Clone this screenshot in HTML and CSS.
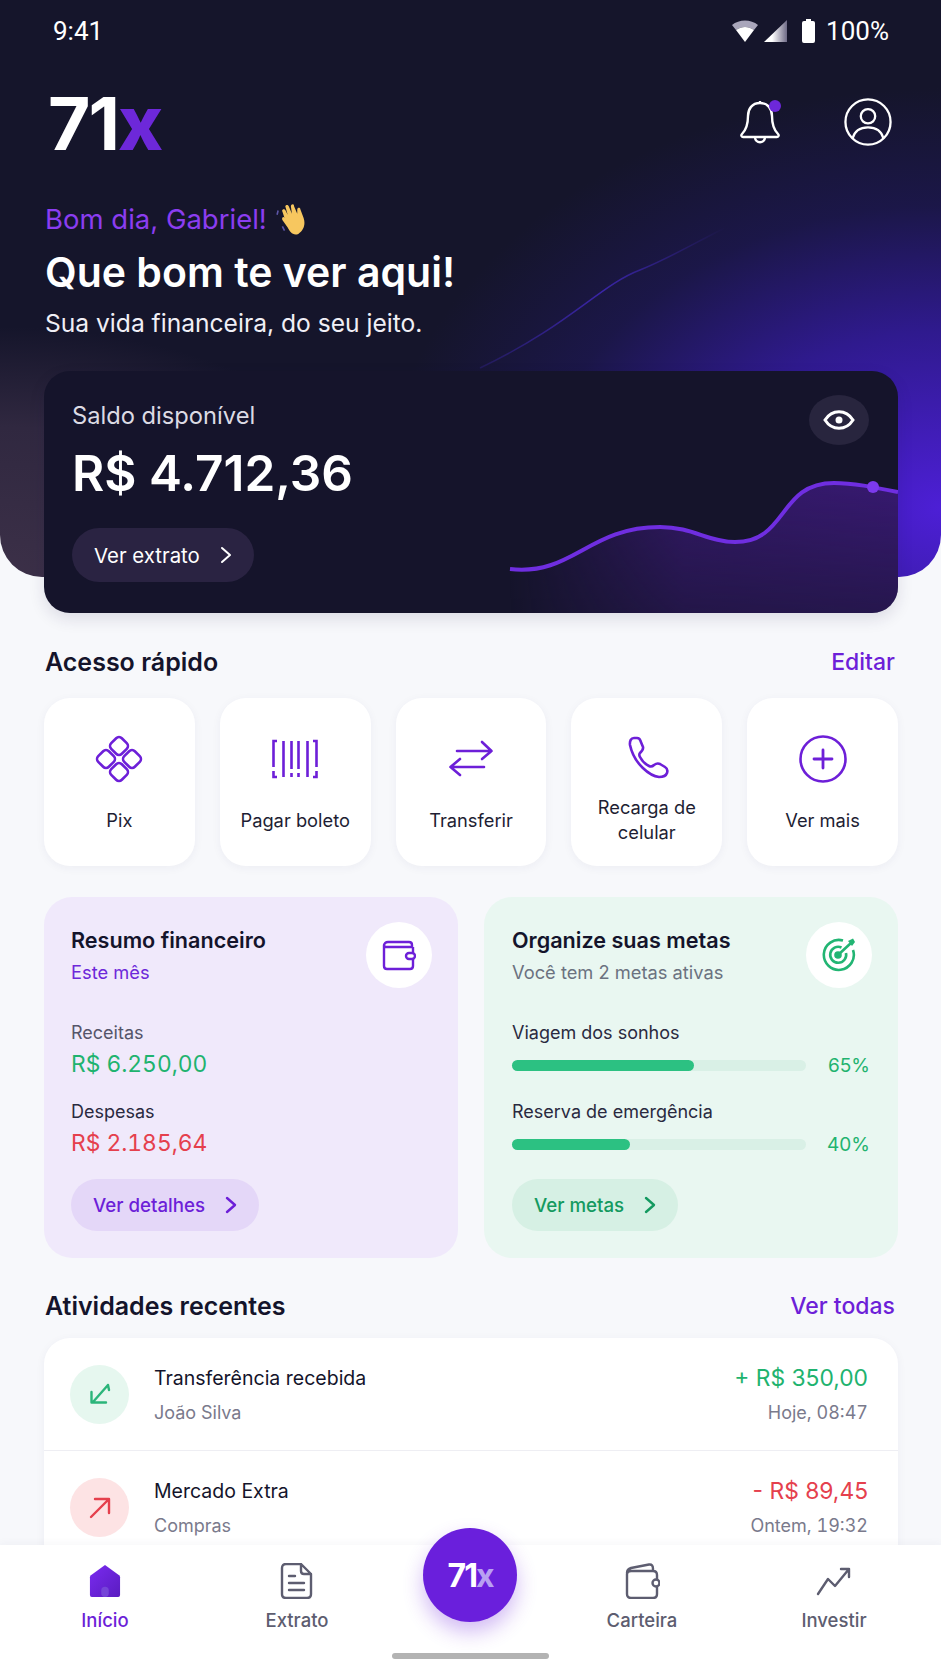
FILE: index.html
```html
<!DOCTYPE html>
<html lang="pt-BR">
<head>
  <meta charset="UTF-8">
  <title>71x</title>
  <link rel="stylesheet" href="styles.css">
</head>
<body>
  <div class="app">
    <header class="hero">
      <svg class="hero-line" viewBox="0 0 941 577"><defs><linearGradient id="line-fade" x1="0" x2="1" y1="0" y2="0"><stop offset="0" stop-color="#3a25a8" stop-opacity=".3"/><stop offset=".5" stop-color="#3a25a8"/><stop offset="1" stop-color="#3a25a8" stop-opacity="0"/></linearGradient></defs><path d="M480 368C570 325 600 285 640 270C670 258 700 240 725 228" fill="none" stroke="url(#line-fade)" stroke-width="1.5"/></svg>
      <div class="status">
        <span class="status-time">9:41</span>
        <div class="status-icons">
          <svg width="26" height="22" viewBox="0 0 26 22"><path d="M0 5C7-1 19-1 26 5L22 10C16 6 10 6 4 10Z" fill="#a9a6bb"/><path d="M4 10C10 6 16 6 22 10L13 22Z" fill="#fff"/></svg>
          <svg width="24" height="22" viewBox="0 0 24 22"><defs><linearGradient id="sig"><stop offset=".35" stop-color="#fff"/><stop offset="1" stop-color="#6e6a86"/></linearGradient></defs><path d="M0 22L23 0V22Z" fill="url(#sig)"/></svg>
          <svg class="status-batt" width="13" height="24" viewBox="0 0 13 24"><path d="M4 0H9V2H11A2 2 0 0 1 13 4V22A2 2 0 0 1 11 24H2A2 2 0 0 1 0 22V4A2 2 0 0 1 2 2H4Z" fill="#fff"/></svg>
          <span>100%</span>
        </div>
      </div>
      <div class="topbar">
        <div class="logo">71<span>x</span></div>
        <div class="topbar-icons">
          <svg width="46" height="48" viewBox="0 0 46 48" fill="none" stroke="#fff" stroke-width="2.4" stroke-linejoin="round"><path d="M21 5V3M21 5C13 5 9 11 9 18C9 27 7 32 3 36C2 37 2 39 4 39H38C40 39 40 37 39 36C35 32 33 27 33 18C33 11 29 5 21 5Z"/><path d="M16 39C16 46 26 46 26 39"/><circle cx="36" cy="8" r="6" fill="#6d28d9" stroke="none"/></svg>
          <svg width="48" height="48" viewBox="0 0 50 50" fill="none" stroke="#fff" stroke-width="2.4"><circle cx="25" cy="25" r="23.5"/><circle cx="25" cy="19" r="7.5"/><path d="M9 42C11 34 17 30.500 25 30.500C33 30.500 39 34 41 42"/></svg>
        </div>
      </div>
      <p class="greeting">Bom dia, Gabriel!
        <svg class="wave" width="34" height="32" viewBox="0 0 32 30"><path d="M2 7L1 11M6 22L8 26" stroke="#5d56a8" stroke-width="1.5" fill="none"/><path d="M8 14L6 8C5 6 8 5 9 7L11 11L9 4C8 2 11 1 12 3L15 10L14 3C14 1 17 0 17 3L20 10L20 6C20 4 23 4 23 6L26 14C28 20 26 26 21 29C16 31 13 27 11 23L6 16C5 14 7 12 8 14Z" fill="#f7c75f"/></svg>
      </p>
      <h1 class="hero-title">Que bom te ver aqui!</h1>
      <p class="hero-sub">Sua vida financeira, do seu jeito.</p>
    </header>

    <section class="balance">
      <svg class="balance-chart" viewBox="0 0 855 242">
        <defs>
          <linearGradient id="glow" x1="0" x2="1" y1="0" y2="0"><stop offset="0" stop-color="#3b1a78" stop-opacity="0"/><stop offset=".45" stop-color="#3b1a78" stop-opacity=".85"/><stop offset="1" stop-color="#3b1a78"/></linearGradient>
          <linearGradient id="fade" x1="0" x2="0" y1="0" y2="1"><stop offset=".35" stop-color="#fff"/><stop offset="1" stop-color="#fff" stop-opacity=".45"/></linearGradient>
          <mask id="fade-mask"><rect width="855" height="242" fill="url(#fade)"/></mask>
        </defs>
        <path d="M467 198C530 205 545 156 617 156C650 156 665 171 692 171C745 171 735 112 791 112C810 112 830 116 855 121V242H467Z" fill="url(#glow)" mask="url(#fade-mask)"/>
        <path d="M467 198C530 205 545 156 617 156C650 156 665 171 692 171C745 171 735 112 791 112C810 112 830 116 855 121" fill="none" stroke="#6f2ee0" stroke-width="4"/>
        <circle cx="830" cy="116" r="6" fill="#7c3aed"/>
      </svg>
      <div class="balance-eye">
        <svg width="32" height="24" viewBox="0 0 32 24" fill="none" stroke="#fff" stroke-width="3"><path d="M2 12C9 1 23 1 30 12C23 23 9 23 2 12Z"/><circle cx="16" cy="12" r="3.500" fill="#fff" stroke="none"/></svg>
      </div>
      <p class="balance-label">Saldo disponível</p>
      <p class="balance-value">R$ 4.712,36</p>
      <a class="balance-btn">Ver extrato
        <svg width="12" height="18" viewBox="0 0 12 18" fill="none" stroke="#fff" stroke-width="2" stroke-linecap="round" stroke-linejoin="round"><path d="M2 2L10 9L2 16"/></svg>
      </a>
    </section>

    <div class="section-head head-quick">
      <h2>Acesso rápido</h2>
      <a>Editar</a>
    </div>

    <div class="quick">
      <div class="quick-item">
        <svg width="50" height="50" viewBox="0 0 50 50" fill="none" stroke="#6d1fd8" stroke-width="2.600">
          <rect x="-7.500" y="-7.500" width="15" height="15" rx="4" transform="translate(25 12) rotate(45)"/>
          <rect x="-7.500" y="-7.500" width="15" height="15" rx="4" transform="translate(25 38) rotate(45)"/>
          <rect x="-7.500" y="-7.500" width="15" height="15" rx="4" transform="translate(12 25) rotate(45)"/>
          <rect x="-7.500" y="-7.500" width="15" height="15" rx="4" transform="translate(38 25) rotate(45)"/>
        </svg>
        <span>Pix</span>
      </div>
      <div class="quick-item">
        <svg width="50" height="50" viewBox="0 0 50 50" fill="none" stroke="#6d1fd8" stroke-width="2.600">
          <path d="M7 7H3.500V33M3.500 37V43H7M13.500 7V43M21.500 7V35M21.500 39V43M28.500 7V35M28.500 39V43M37.500 7V43M43 7H46.500V33M46.500 37V43H43"/>
        </svg>
        <span>Pagar boleto</span>
      </div>
      <div class="quick-item">
        <svg width="50" height="50" viewBox="0 0 50 50" fill="none" stroke="#6d1fd8" stroke-width="2.600" stroke-linecap="round" stroke-linejoin="round">
          <path d="M11 17H45.500M36 8L45.500 17L36 25"/><path d="M38 33H4.500M14 25L4.500 33L14 41"/>
        </svg>
        <span>Transferir</span>
      </div>
      <div class="quick-item">
        <svg width="50" height="50" viewBox="0 0 50 50" fill="none" stroke="#6d1fd8" stroke-width="2.600" stroke-linejoin="round">
          <path d="M8 11C7.500 7 9 4 12 4H15C17 4 18 5 18.500 7L21 13C21.500 15 20 17 18 19C17 20 17 21 18 23C20 27 23 30 27 32C29 33 30 33 32 31C34 29.500 36 29 38 30L43 33C45.500 34.500 46 36 45 39C44 42 41 43 37 43C28 42 12 30 8 11Z"/>
        </svg>
        <span>Recarga de celular</span>
      </div>
      <div class="quick-item">
        <svg width="50" height="50" viewBox="0 0 50 50" fill="none" stroke="#6d1fd8" stroke-width="2.600" stroke-linecap="round">
          <circle cx="25" cy="25" r="22.500"/><path d="M25 16V34M16 25H34" stroke-width="2.800"/>
        </svg>
        <span>Ver mais</span>
      </div>
    </div>

    <div class="panels">
      <section class="panel panel-purple">
        <div class="panel-badge">
          <svg width="34" height="32" viewBox="0 0 34 32" fill="none" stroke="#6d1fd8" stroke-width="2.400" stroke-linejoin="round"><path d="M2 7C2 4 4 3 6 3H27C29 3 30 4 30 6V8H5C3 8 2 7 2 6V27C2 29 3.500 30 5 30H28C29.500 30 31 29 31 27V8"/><rect x="24" y="14" width="9" height="6" rx="3" fill="#fff"/></svg>
        </div>
        <h3>Resumo financeiro</h3>
        <p class="panel-sub sub-purple">Este mês</p>
        <p class="panel-label label-first label-muted">Receitas</p>
        <p class="panel-money money-green">R$ 6.250,00</p>
        <p class="panel-label label-next">Despesas</p>
        <p class="panel-money money-red">R$ 2.185,64</p>
        <a class="panel-btn btn-purple">Ver detalhes
          <svg width="12" height="18" viewBox="0 0 12 18" fill="none" stroke="currentColor" stroke-width="2.400" stroke-linecap="round" stroke-linejoin="round"><path d="M2 2L10 9L2 16"/></svg>
        </a>
      </section>
      <section class="panel panel-green">
        <div class="panel-badge">
          <svg width="34" height="34" viewBox="0 0 34 34" fill="none" stroke="#22b573" stroke-width="2.600"><path d="M21 2.500A15 15 0 1 0 31 12"/><path d="M19.500 9.500A8 8 0 1 0 24 15"/><circle cx="16" cy="17" r="2.500" fill="#22b573"/><path d="M16 17L29 5" stroke-linecap="round"/><path d="M26 3L31 0.500L33 4L30 8Z" fill="#22b573" stroke="none"/></svg>
        </div>
        <h3>Organize suas metas</h3>
        <p class="panel-sub">Você tem 2 metas ativas</p>
        <p class="panel-label label-first">Viagem dos sonhos</p>
        <div class="goal"><div class="goal-track"><div class="goal-fill" style="width:62%"></div></div><span>65%</span></div>
        <p class="panel-label label-goal">Reserva de emergência</p>
        <div class="goal"><div class="goal-track"><div class="goal-fill" style="width:40%"></div></div><span>40%</span></div>
        <a class="panel-btn btn-green">Ver metas
          <svg width="12" height="18" viewBox="0 0 12 18" fill="none" stroke="currentColor" stroke-width="2.400" stroke-linecap="round" stroke-linejoin="round"><path d="M2 2L10 9L2 16"/></svg>
        </a>
      </section>
    </div>

    <div class="section-head head-recent">
      <h2>Atividades recentes</h2>
      <a>Ver todas</a>
    </div>

    <div class="activity">
      <div class="activity-row">
        <div class="activity-icon icon-green">
          <svg width="24" height="24" viewBox="0 0 24 24" fill="none" stroke="#2bb57a" stroke-width="2.400" stroke-linecap="round" stroke-linejoin="round"><path d="M20 3L5 20M3.500 10V20.500H18M20 3L21 8"/></svg>
        </div>
        <div class="activity-main">
          <p class="activity-name">Transferência recebida</p>
          <p class="activity-meta">João Silva</p>
        </div>
        <div class="activity-side">
          <p class="activity-value money-green">+ R$ 350,00</p>
          <p class="activity-meta">Hoje, 08:47</p>
        </div>
      </div>
      <div class="activity-row">
        <div class="activity-icon icon-red">
          <svg width="24" height="24" viewBox="0 0 24 24" fill="none" stroke="#e5404d" stroke-width="2.400" stroke-linecap="round" stroke-linejoin="round"><path d="M3 22L21 4M7 4H21V18"/></svg>
        </div>
        <div class="activity-main">
          <p class="activity-name">Mercado Extra</p>
          <p class="activity-meta">Compras</p>
        </div>
        <div class="activity-side">
          <p class="activity-value money-red">- R$ 89,45</p>
          <p class="activity-meta">Ontem, 19:32</p>
        </div>
      </div>
    </div>

    <nav class="nav">
      <div class="nav-fab">71<span>x</span></div>
      <div class="nav-item nav-active">
        <svg width="32" height="36" viewBox="0 0 34 36"><defs><linearGradient id="home" x1="0" x2="1" y1="0" y2="1"><stop offset="0" stop-color="#7a2bf0"/><stop offset="1" stop-color="#5a1cc0"/></linearGradient></defs><path d="M17 1L32 12Q33 13 33 14V33Q33 35 31 35H3Q1 35 1 33V14Q1 13 2 12Z" fill="url(#home)"/><rect x="13" y="24" width="8" height="11" rx="4" fill="#7645d8"/></svg>
        <span>Início</span>
      </div>
      <div class="nav-item">
        <svg width="34" height="36" viewBox="0 0 34 36" fill="none" stroke="#5d5d70" stroke-width="2.400" stroke-linejoin="round" stroke-linecap="round"><path d="M21 1H6Q2 1 2 5V31Q2 35 6 35H27Q31 35 31 31V11ZM21 1V8Q21 11 24 11H31"/><path d="M9 13H15M9 20H24M9 27H24"/></svg>
        <span>Extrato</span>
      </div>
      <div class="nav-spacer"></div>
      <div class="nav-item">
        <svg width="36" height="36" viewBox="0 0 36 36" fill="none" stroke="#5d5d70" stroke-width="2.400" stroke-linejoin="round"><path d="M3 10C3 7 4 6 7 5L25 1.500C28 1 29 3 29 6V8M3 11C3 9 5 8 7 8H29C32 8 33 10 33 12V31C33 33 32 35 29 35H7C4 35 3 33 3 31Z"/><circle cx="32" cy="20" r="3.500" fill="#fff"/></svg>
        <span>Carteira</span>
      </div>
      <div class="nav-item">
        <svg width="36" height="36" viewBox="0 0 36 36" fill="none" stroke="#5d5d70" stroke-width="2.400" stroke-linejoin="round" stroke-linecap="round"><path d="M2 31L12 16L19 23L33 6M25 6H33V14"/></svg>
        <span>Investir</span>
      </div>
      <div class="nav-handle"></div>
    </nav>
  </div>
</body>
</html>
```

FILE: styles.css
```css
* {
  box-sizing: border-box;
}

body {
  margin: 0;
  font-family: Inter, "Noto Sans", sans-serif;
  color: #14142b;
  background-color: #f7f8fb;
}

p,
h1,
h2,
h3 {
  margin: 0;
  font-weight: 400;
}

a {
  cursor: pointer;
}

.app {
  position: relative;
  width: 941px;
  height: 1672px;
  overflow: hidden;
  background-color: #f7f8fb;
}

/* hero */
.hero {
  position: relative;
  height: 577px;
  padding: 0 45px;
  border-radius: 0 0 42px 42px;
  color: #fff;
  background:
    radial-gradient(ellipse 560px 420px at 100% 88%, #4d1fd6 0, #2f1a8e 42%, rgba(32, 24, 96, 0.55) 72%, rgba(20, 20, 43, 0) 100%),
    radial-gradient(ellipse 420px 250px at 0 100%, #3c3048 0, #302840 60%, rgba(26, 24, 46, 0) 100%),
    #15152b;
}

.hero-line {
  position: absolute;
  top: 0;
  left: 0;
  width: 941px;
  height: 577px;
}

.status {
  position: relative;
  display: flex;
  align-items: center;
  justify-content: space-between;
  height: 60px;
  padding: 1px 7px 0 8px;
  font-family: Roboto, sans-serif;
  font-size: 26px;
}

.status-icons {
  display: flex;
  align-items: center;
  gap: 6px;
}

.status-batt {
  margin: 0 5px 0 8px;
}

.topbar {
  position: relative;
  display: flex;
  align-items: center;
  justify-content: space-between;
  height: 70px;
  margin-top: 27px;
}

.logo {
  margin-left: 3px;
  padding-top: 2px;
  font-size: 73px;
  font-weight: 700;
  letter-spacing: -2px;
  line-height: 70px;
}

.logo span {
  font-size: 76px;
  font-weight: 800;
  color: #6d28d9;
}

.topbar-icons {
  display: flex;
  align-items: center;
  gap: 59px;
  margin-right: 4px;
}

.greeting {
  position: relative;
  display: flex;
  align-items: center;
  gap: 9px;
  margin-top: 44px;
  font-size: 27.500px;
  line-height: 36px;
  color: #8b3df0;
}

.hero-title {
  position: relative;
  margin-top: 9px;
  font-size: 41px;
  font-weight: 600;
  line-height: 52px;
}

.hero-sub {
  position: relative;
  margin-top: 9px;
  font-size: 24.600px;
  line-height: 32px;
  color: #f0eff6;
}

/* balance card */
.balance {
  position: relative;
  height: 242px;
  margin: -206px 43px 0 44px;
  padding: 28px 27px 0 28px;
  border-radius: 26px;
  overflow: hidden;
  background-color: #15142b;
  box-shadow: 0 6px 16px rgba(30, 25, 70, 0.12);
  color: #fff;
}

.balance-chart {
  position: absolute;
  top: 0;
  left: -1px;
  width: 855px;
  height: 242px;
}

.balance-eye {
  position: absolute;
  top: 24px;
  right: 29px;
  display: flex;
  align-items: center;
  justify-content: center;
  width: 60px;
  height: 50px;
  border-radius: 50%;
  background-color: #28253e;
}

.balance-label {
  position: relative;
  font-size: 23.700px;
  line-height: 34px;
  color: #dcdbe4;
}

.balance-value {
  position: relative;
  margin-top: 11px;
  font-size: 49.500px;
  font-weight: 600;
  line-height: 58px;
}

.balance-btn {
  position: relative;
  display: inline-flex;
  align-items: center;
  gap: 20px;
  height: 54px;
  margin-top: 26px;
  padding: 0 22px;
  border-radius: 27px;
  font-size: 20.400px;
  background-color: #2a2342;
}

/* section titles */
.section-head {
  display: flex;
  align-items: center;
  justify-content: space-between;
  padding: 0 46px 0 45px;
}

.section-head h2 {
  font-size: 25px;
  font-weight: 600;
  line-height: 32px;
}

.section-head a {
  font-size: 23px;
  font-weight: 500;
  color: #6d1fd8;
}

.head-quick {
  margin-top: 33px;
}

.head-recent {
  margin-top: 32px;
}

/* quick access */
.quick {
  display: grid;
  grid-template-columns: repeat(5, 1fr);
  gap: 25px;
  height: 168px;
  margin: 20px 43px 0 44px;
}

.quick-item {
  position: relative;
  padding: 36px 8px 0;
  border-radius: 26px;
  background-color: #fff;
  box-shadow: 0 2px 10px rgba(40, 40, 90, 0.05);
  text-align: center;
}

.quick-item svg {
  display: block;
  margin: 0 auto;
}

.quick-item span {
  display: flex;
  align-items: center;
  justify-content: center;
  height: 52px;
  margin-top: 10px;
  font-size: 18.300px;
  line-height: 25px;
  color: #1e1e33;
}

/* panels */
.panels {
  display: grid;
  grid-template-columns: 1fr 1fr;
  gap: 26px;
  height: 361px;
  margin: 31px 43px 0 44px;
}

.panel {
  position: relative;
  padding: 28px 27px 0;
  border-radius: 28px;
}

.panel-purple {
  background-color: #f0e9fb;
}

.panel-green {
  padding-left: 28px;
  background-color: #e9f7f1;
}

.panel-badge {
  position: absolute;
  top: 25px;
  right: 26px;
  display: flex;
  align-items: center;
  justify-content: center;
  width: 66px;
  height: 66px;
  border-radius: 50%;
  background-color: #fff;
}

.panel h3 {
  font-size: 21.600px;
  font-weight: 600;
  line-height: 30px;
}

.panel-sub {
  margin-top: 3px;
  font-size: 18.300px;
  line-height: 28px;
  color: #6b7280;
}

.sub-purple {
  color: #6d28d9;
}

.panel-label {
  font-size: 18px;
  line-height: 26px;
  color: #2a2a3f;
}

.label-muted {
  color: #55556a;
}

.label-first {
  margin-top: 34px;
}

.label-next {
  margin-top: 19px;
}

.label-goal {
  margin-top: 19px;
}

.panel-money {
  margin-top: 2px;
  font-size: 22.800px;
  font-variant-numeric: tabular-nums;
  line-height: 32px;
}

.money-green {
  color: #1fb36f;
}

.money-red {
  color: #e5404d;
}

.goal {
  display: flex;
  align-items: center;
  justify-content: space-between;
  height: 30px;
  margin-top: 4px;
  padding-right: 1px;
  font-size: 19px;
  color: #1fb36f;
}

.goal-track {
  width: 294px;
  height: 11px;
  border-radius: 6px;
  background-color: #d9f0e6;
}

.goal-fill {
  height: 100%;
  border-radius: 6px;
  background-color: #2cc182;
}

.panel-btn {
  display: inline-flex;
  align-items: center;
  gap: 20px;
  height: 52px;
  margin-top: 20px;
  padding: 0 22px;
  border-radius: 26px;
  font-size: 18.700px;
  font-weight: 500;
}

.btn-purple {
  color: #6d1fd8;
  background-color: #e4d7f8;
}

.btn-green {
  color: #149a60;
  background-color: #d6f0e4;
}

/* recent activity */
.activity {
  height: 240px;
  margin: 16px 43px 0 44px;
  border-radius: 26px 26px 0 0;
  background-color: #fff;
  box-shadow: 0 2px 10px rgba(40, 40, 90, 0.05);
}

.activity-row {
  display: flex;
  align-items: center;
  height: 113px;
  padding: 0 30px 0 26px;
  border-bottom: 1px solid #eeeef3;
}

.activity-icon {
  display: flex;
  flex: none;
  align-items: center;
  justify-content: center;
  width: 59px;
  height: 59px;
  border-radius: 50%;
}

.icon-green {
  background-color: #e6f7ef;
}

.icon-red {
  background-color: #fde3e4;
}

.activity-main {
  flex: 1;
  margin-left: 25px;
  padding-top: 2px;
}

.activity-side {
  padding-top: 2px;
  text-align: right;
}

.activity-name {
  font-size: 19.500px;
  line-height: 28px;
}

.activity-value {
  font-size: 22.800px;
  line-height: 28px;
}

.activity-meta {
  margin-top: 7px;
  font-size: 18px;
  font-variant-numeric: tabular-nums;
  line-height: 28px;
  color: #7a7a8c;
}

/* bottom nav */
.nav {
  position: absolute;
  bottom: 0;
  left: 0;
  display: grid;
  grid-template-columns: 210px 174px 173px 170px 214px;
  width: 941px;
  height: 127px;
  padding-top: 18px;
  background-color: #fff;
  box-shadow: 0 -2px 8px rgba(40, 40, 90, 0.04);
}

.nav-item {
  display: flex;
  flex-direction: column;
  align-items: center;
  gap: 10px;
  font-size: 18.500px;
  font-weight: 500;
  color: #5d5d70;
}

.nav-item svg {
  display: block;
}

.nav-active {
  color: #6d1fd8;
}

.nav-fab {
  position: absolute;
  top: -17px;
  left: 423px;
  display: flex;
  align-items: center;
  justify-content: center;
  width: 94px;
  height: 94px;
  border-radius: 50%;
  font-size: 32px;
  font-weight: 700;
  letter-spacing: -2px;
  color: #fff;
  background-color: #6a1fdc;
  box-shadow: 0 10px 20px rgba(106, 31, 220, 0.3);
}

.nav-fab span {
  color: #b9a0f2;
}

.nav-handle {
  position: absolute;
  bottom: 13px;
  left: 392px;
  width: 157px;
  height: 6px;
  border-radius: 3px;
  background-color: #b3b3b3;
}
```
